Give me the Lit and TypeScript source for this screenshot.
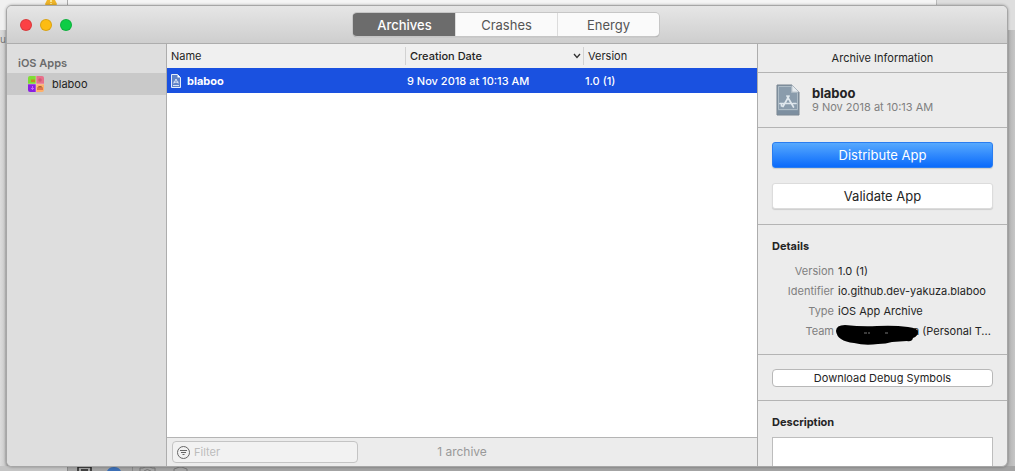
import { LitElement, html, css, svg } from "lit";
import { customElement, state } from "lit/decorators.js";

const documentIcon = svg`
  <svg class="doc" viewBox="0 0 24 32" aria-hidden="true">
    <path d="M1 1h15l7 7v23H1z" fill="#8496a6" stroke="#76838f"/>
    <path d="M2.500 2.500h13v6h6v17h-19z" fill="#8a9cac" stroke="#b9c5ce" stroke-width=".8"/>
    <path d="M2 27h20v3H2z" fill="#7d8fa0"/>
    <path d="M16 1v7h7z" fill="#e6ecf0" stroke="#a9b4bd" stroke-width=".6"/>
    <g fill="none" stroke="#dfe7ed" stroke-width="1.700" stroke-linecap="round">
      <path d="M13 12L7 22.500M11 12L17.500 23M4 19.500h10M17 19.500h3M5.500 19.500v2.500"/>
    </g>
  </svg>`;

const smallDocumentIcon = svg`
  <svg class="small-doc" viewBox="0 0 10 14" aria-hidden="true">
    <path d="M.5.5h6l3 3v10h-9z" fill="#5f82c8" stroke="#e4ecfa"/>
    <path d="M6.500.5v3h3z" fill="#fff"/>
    <path d="M5 5L2.800 9.500M5 5l2.200 4.500M2.500 8.200h5M2 11.500h6" fill="none" stroke="#e4ecfa" stroke-width=".9"/>
  </svg>`;

const appIcon = svg`
  <svg class="app-icon" viewBox="0 0 16 16" aria-hidden="true">
    <path d="M2 0h6v8H0V2a2 2 0 0 1 2-2z" fill="#7fdc35"/>
    <path d="M8 0h6a2 2 0 0 1 2 2v6H8z" fill="#e8708a"/>
    <path d="M0 8h8v8H2a2 2 0 0 1-2-2z" fill="#8a1fe0"/>
    <path d="M8 8h8v6a2 2 0 0 1-2 2H8z" fill="#ffb06a"/>
    <path d="M3 3.500h4v2.500H3z" fill="#c58a1c"/>
    <circle cx="12" cy="4" r="1.800" fill="#cf5878"/>
    <path d="M4.500 10v4M3 12.500h3" stroke="#c565f5"/>
    <path d="M9 11.500q3-2.500 6 0z" fill="#8b3b20"/>
    <path d="M9 13h6" stroke="#c0392b"/>
    <path d="M8 0v16M0 8h16" stroke="#e9dadc" stroke-width=".5"/>
  </svg>`;

@customElement("app-root")
export class AppRoot extends LitElement {
  @state() private tab = "Archives";

  static styles = css`
    :host {
      display: grid;
      height: 100vh;
      overflow: hidden;
      grid-template: minmax(0, 1fr) / minmax(0, 1fr);
      font: 11px/16px Inter, "Liberation Sans", sans-serif;
      color: #242424;
    }
    * { box-sizing: border-box; }
    button, input, textarea { font: inherit; color: inherit; margin: 0; }
    h2, h3, p, dl, dd, ul { margin: 0; padding: 0; }
    svg { display: block; flex: none; }

    .backdrop, .window { grid-area: 1 / 1; }
    .backdrop {
      display: flex;
      flex-direction: column;
      justify-content: space-between;
      background: linear-gradient(90deg, #dcdcdc, #cfcfcf 4px, #aaa 8px, #aaa 99%, #c6c6c6);
    }
    .behind-top { display: flex; height: 30px; background: #f5f5f5; }
    .behind-left { width: 68px; padding-left: 44px; border-right: 1px solid #aaa; background: #f0f0f0; }
    .behind-right { width: 79px; margin-left: auto; border-left: 1px solid #bbb; background: #dedede; }
    .behind-text { flex: 1; font-size: 10px; line-height: 18px; color: #777; }
    .behind-bottom { display: flex; height: 5px; background: linear-gradient(90deg, #c4c4c4 67px, #a3a3a3 67px); }
    .behind-tools { margin-left: 67px; }

    .window {
      display: grid;
      grid-template: 38px minmax(0, 1fr) / 160px minmax(0, 1fr) 250px;
      margin: 5px 7px 4px 6px;
      border: 1px solid #a6a6a6;
      border-radius: 6px;
      overflow: hidden;
      background: #ececec;
      box-shadow: 0 0 3px #0005;
    }
    .titlebar {
      grid-column: 1 / -1;
      display: grid;
      grid-template-columns: 1fr auto 1fr;
      align-items: center;
      padding: 0 15px 0 13px;
      border-bottom: 1px solid #adadad;
      background: linear-gradient(#e6e6e6, #cecece);
    }
    .lights { display: flex; gap: 8px; }
    .light { width: 12px; height: 12px; padding: 0; border: 1px solid #0002; border-radius: 50%; }
    .close { background: #fc4144; }
    .minimize { background: #fdbc12; }
    .zoom { background: #0dcd45; }
    .tabs {
      display: flex;
      border-radius: 4px;
      overflow: hidden;
      box-shadow: 0 0 0 1px #c6c6c6, 0 1px 1px #888;
    }
    .tab {
      width: 102px;
      height: 23px;
      padding: 0;
      border: 0;
      border-left: 1px solid #dcdcdc;
      background: #fafafa;
      color: #555;
      font-size: 13px;
    }
    .tab.selected { background: #6c6c6c; border-color: #6c6c6c; color: #fff; font-weight: 500; }

    .sidebar { padding-top: 11px; border-right: 1px solid #adadad; background: #dedede; }
    .sidebar h2 { padding-left: 11px; font-size: 11px; font-weight: 600; color: #6b6b6b; }
    .app {
      display: flex;
      align-items: center;
      gap: 8px;
      height: 22px;
      margin-top: 2px;
      padding-left: 21px;
      background: #c9c9c9;
      color: #222;
      text-decoration: none;
    }
    .app-icon { width: 16px; height: 16px; }

    .archives { display: flex; flex-direction: column; min-width: 0; background: #fff; }
    .table { width: 100%; border-collapse: collapse; table-layout: fixed; }
    .name-col { width: 239px; }
    .date-col { width: 178px; }
    .table th {
      height: 24px;
      padding: 0 0 1px 4px;
      text-align: left;
      font-weight: 400;
      background: linear-gradient(#d2d2d2, #d2d2d2) right / 1px 18px no-repeat #f0f0f0;
    }
    .table th:last-child { background: #f0f0f0; }
    .table th.sorted { font-weight: 500; }
    .sort { display: flex; align-items: center; justify-content: space-between; padding-right: 3px; }
    .table td { height: 25px; padding: 0 0 0 1px; background: #1a51e0; color: #fff; font-weight: 500; }
    .cell { display: flex; align-items: center; gap: 6px; padding-left: 3px; font-weight: 700; }
    .small-doc { width: 10px; height: 14px; }
    .footer {
      display: grid;
      grid-template-columns: 1fr auto 1fr;
      align-items: center;
      height: 29px;
      margin-top: auto;
      padding: 0 5px;
      border-top: 1px solid #b4b4b4;
      background: #ececec;
      color: #999;
    }
    .count { font-size: 12px; }
    .filter {
      display: flex;
      align-items: center;
      gap: 4px;
      width: 186px;
      height: 22px;
      padding-left: 4px;
      border: 1px solid #c4c4c4;
      border-radius: 4px;
      background: #f2f2f2;
    }
    .filter input { width: 100%; min-width: 0; padding: 0; border: 0; outline: 0; background: none; }
    .filter input::placeholder { color: #bcbcbc; opacity: 1; }

    .inspector { border-left: 1px solid #adadad; overflow: hidden; }
    .heading { height: 29px; border-bottom: 1px solid #b4b4b4; font-size: 11px; line-height: 28px; font-weight: 400; text-align: center; }
    .section { padding: 14px; border-bottom: 1px solid #b4b4b4; }
    .summary { display: flex; align-items: center; gap: 12px; height: 55px; padding: 0 18px; }
    .doc { width: 24px; height: 32px; }
    .summary h2 { font-size: 13px; line-height: 14px; font-weight: 700; }
    .summary p { line-height: 14px; color: #808080; }
    .actions { display: grid; gap: 15px; padding-bottom: 15px; }
    .action { height: 26px; padding: 0; border: 1px solid #dcdcdc; border-radius: 3px; background: #fff; font-size: 13px; box-shadow: 0 1px 1px #0002; }
    .primary { border-color: #2a7df0; background: linear-gradient(#57a9fe, #0a6afb); color: #fff; }
    .section h3 { font-size: 11px; line-height: 14px; font-weight: 700; }
    .details { padding-bottom: 13px; }
    .facts { display: grid; grid-template-columns: 62px minmax(0, 1fr); column-gap: 4px; margin-top: 8px; line-height: 20px; }
    .facts dt { text-align: right; color: #808080; }
    .facts dd { white-space: nowrap; }
    .team { display: flex; align-items: center; height: 20px; }
    .scribble { width: 84px; height: 22px; margin: 7px -6px 0 -3px; z-index: 1; }
    .download { display: block; width: 100%; height: 18px; padding: 0; border: 1px solid #b8b8b8; border-radius: 4px; background: #fff; line-height: 16px; }
    .download-box { padding-bottom: 13px; }
    .description { display: block; padding: 14px; font-weight: 700; line-height: 14px; }
    .description textarea { display: block; width: 100%; height: 80px; margin-top: 8px; border: 1px solid #bdbdbd; border-radius: 0; background: #fff; resize: none; font-weight: 400; }
  `;

  private renderBackdrop() {
    return html`
      <div class="backdrop">
        <div class="behind-top">
          <div class="behind-left">
            <svg width="14" height="5" viewBox="0 0 14 5"><path d="M3 0h8l2 4q0 1-1 1H2Q1 5 1 4z" fill="#efb52a"/><path d="M7 0v2M7 3v1" stroke="#fff3b0" stroke-width="1.500"/></svg>
          </div>
          <div class="behind-right"></div>
        </div>
        <div class="behind-text">u</div>
        <div class="behind-bottom">
          <svg class="behind-tools" width="130" height="5" viewBox="0 0 130 5" fill="none" stroke="#555">
            <path d="M.5 0v5M65.500 0v5" stroke="#888"/>
            <path d="M11 5V1h13v4M14 4h7" stroke="#222" stroke-width="1.500"/>
            <path d="M40 5q2-4 7-4t7 4z" fill="#3c6fb5" stroke="none"/>
            <path d="M73 5V2h3l2-1h5l2 1h3v3M77 5q3-3 7 0" stroke="#777"/>
            <path d="M107 5V3l3-1 2-1h3l2 1 3 1v2" stroke="#777"/>
          </svg>
        </div>
      </div>`;
  }

  private renderArchives() {
    return html`
      <main class="archives">
        <table class="table">
          <colgroup><col class="name-col"><col class="date-col"><col></colgroup>
          <thead>
            <tr>
              <th scope="col">Name</th>
              <th scope="col" class="sorted" aria-sort="descending">
                <div class="sort">Creation Date
                  <svg width="8" height="6" viewBox="0 0 8 6" fill="none" stroke="#333" stroke-width="1.300"><path d="M1 1l3 3.500L7 1"/></svg>
                </div>
              </th>
              <th scope="col">Version</th>
            </tr>
          </thead>
          <tbody>
            <tr>
              <td><div class="cell">${smallDocumentIcon}blaboo</div></td>
              <td>9 Nov 2018 at 10:13 AM</td>
              <td>1.0 (1)</td>
            </tr>
          </tbody>
        </table>
        <footer class="footer">
          <label class="filter">
            <svg width="13" height="13" viewBox="0 0 13 13" fill="none" stroke="#666"><circle cx="6.500" cy="6.500" r="6"/><path d="M3 4.500h7M4 6.500h5M5.500 8.500h2"/></svg>
            <input type="text" placeholder="Filter" aria-label="Filter">
          </label>
          <span class="count">1 archive</span>
        </footer>
      </main>`;
  }

  private renderInspector() {
    return html`
      <aside class="inspector">
        <h2 class="heading">Archive Information</h2>
        <div class="section summary">
          ${documentIcon}
          <div><h2>blaboo</h2><p>9 Nov 2018 at 10:13 AM</p></div>
        </div>
        <div class="section actions">
          <button class="action primary">Distribute App</button>
          <button class="action">Validate App</button>
        </div>
        <section class="section details">
          <h3>Details</h3>
          <dl class="facts">
            <dt>Version</dt><dd>1.0 (1)</dd>
            <dt>Identifier</dt><dd>io.github.dev-yakuza.blaboo</dd>
            <dt>Type</dt><dd>iOS App Archive</dd>
            <dt>Team</dt>
            <dd class="team">
              <svg class="scribble" viewBox="0 0 84 22" aria-hidden="true">
                <path d="M1 7Q1 1 10 1q18 2 32 1 17-1 31 1 10 1 10 5 0 4-5 6-1 4-6 3l-15 1q-6 2-14 2-13 2-24-1Q2 17 1 7z" fill="#000"/>
                <path d="M29 9h3M33 9h2M50 9h3" stroke="#777"/>
              </svg>
              <span>a (Personal T...</span>
            </dd>
          </dl>
        </section>
        <div class="section download-box"><button class="download">Download Debug Symbols</button></div>
        <label class="description">Description<textarea></textarea></label>
      </aside>`;
  }

  render() {
    return html`
      ${this.renderBackdrop()}
      <div class="window">
        <header class="titlebar">
          <div class="lights">
            <button class="light close" aria-label="Close"></button>
            <button class="light minimize" aria-label="Minimize"></button>
            <button class="light zoom" aria-label="Zoom"></button>
          </div>
          <div class="tabs">
            ${["Archives", "Crashes", "Energy"].map((name) => html`
              <button class="tab ${this.tab === name ? "selected" : ""}"
                aria-pressed=${this.tab === name} @click=${() => (this.tab = name)}>${name}</button>`)}
          </div>
        </header>
        <nav class="sidebar">
          <h2>iOS Apps</h2>
          <a class="app" href="#blaboo">${appIcon}blaboo</a>
        </nav>
        ${this.renderArchives()}
        ${this.renderInspector()}
      </div>`;
  }
}
